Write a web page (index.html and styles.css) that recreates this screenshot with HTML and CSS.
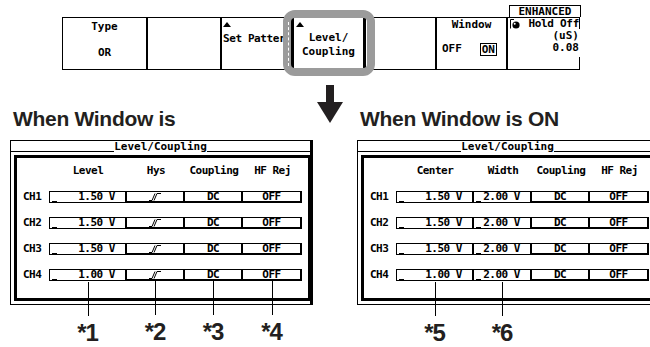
FILE: index.html
```html
<!DOCTYPE html>
<html>
<head>
    <meta charset="UTF-8">
    <title>Level/Coupling</title>
    <link rel="stylesheet" href="styles.css">
</head>
<body>
    <div class="softkeys">
        <div class="key key-type">
            <span>Type</span>
            <span>OR</span>
        </div>
        <div class="key key-blank1"></div>
        <div class="key key-pattern">
            <i class="tri"></i>
            <span class="cut">Set Pattern</span>
        </div>
        <div class="key key-level">
            <i class="tri"></i>
            <span class="lvl">Level/</span>
            <span>Coupling</span>
            <b class="ring"></b>
        </div>
        <div class="key key-blank2"></div>
        <div class="key key-window">
            <span>Window</span>
            <div class="toggle"><span>OFF</span><span class="on">ON</span></div>
        </div>
        <div class="key key-hold">
            <span class="tab">ENHANCED</span>
            <span class="hold-title"><svg width="10" height="10" viewBox="0 0 10 10"><path d="M0.5 9.5V0.5H4" stroke="#000" fill="none"/><circle cx="6" cy="6" r="3.6" fill="#000"/><circle cx="4.7" cy="4.7" r="1" fill="#fff"/></svg>Hold Off</span>
            <span>(uS)</span>
            <span>0.08</span>
        </div>
    </div>

    <div class="views">
        <section class="view view-left">
            <h2>When Window is</h2>
            <div class="screen">
                <div class="screen-title"><span>Level/Coupling</span></div>
                <div class="table">
                    <div class="grid">
                        <span></span><span class="head">Level</span><span class="head">Hys</span><span class="head">Coupling</span><span class="head">HF Rej</span>

                        <span class="ch">CH1</span>
                        <span class="cell num">1.50 V</span>
                        <span class="cell sel"><svg class="hys" width="12" height="9" viewBox="0 0 12 9"><path d="M0 8.5H3L6 1.5M5 8.5L8 1.5H12" stroke="#000" fill="none"/></svg></span>
                        <span class="cell sel">DC</span>
                        <span class="cell sel">OFF</span>

                        <span class="ch">CH2</span>
                        <span class="cell num">1.50 V</span>
                        <span class="cell sel"><svg class="hys" width="12" height="9" viewBox="0 0 12 9"><path d="M0 8.5H3L6 1.5M5 8.5L8 1.5H12" stroke="#000" fill="none"/></svg></span>
                        <span class="cell sel">DC</span>
                        <span class="cell sel">OFF</span>

                        <span class="ch">CH3</span>
                        <span class="cell num">1.50 V</span>
                        <span class="cell sel"><svg class="hys" width="12" height="9" viewBox="0 0 12 9"><path d="M0 8.5H3L6 1.5M5 8.5L8 1.5H12" stroke="#000" fill="none"/></svg></span>
                        <span class="cell sel">DC</span>
                        <span class="cell sel">OFF</span>

                        <span class="ch">CH4</span>
                        <span class="cell num pin">1.00 V<span class="tag">*1</span></span>
                        <span class="cell sel pin"><svg class="hys" width="12" height="9" viewBox="0 0 12 9"><path d="M0 8.5H3L6 1.5M5 8.5L8 1.5H12" stroke="#000" fill="none"/></svg><span class="tag">*2</span></span>
                        <span class="cell sel pin">DC<span class="tag">*3</span></span>
                        <span class="cell sel pin">OFF<span class="tag">*4</span></span>
                    </div>
                </div>
            </div>
        </section>

        <div class="arrow">
            <svg width="26" height="38" viewBox="0 0 26 38"><rect x="9" y="0" width="8" height="20" fill="#231f20"/><polygon points="0,17 26,17 13,38" fill="#231f20"/></svg>
        </div>

        <section class="view view-right">
            <h2>When Window is ON</h2>
            <div class="screen">
                <div class="screen-title"><span>Level/Coupling</span></div>
                <div class="table">
                    <div class="grid">
                        <span></span><span class="head">Center</span><span class="head">Width</span><span class="head">Coupling</span><span class="head">HF Rej</span>

                        <span class="ch">CH1</span>
                        <span class="cell num">1.50 V</span>
                        <span class="cell num">2.00 V</span>
                        <span class="cell sel">DC</span>
                        <span class="cell sel">OFF</span>

                        <span class="ch">CH2</span>
                        <span class="cell num">1.50 V</span>
                        <span class="cell num">2.00 V</span>
                        <span class="cell sel">DC</span>
                        <span class="cell sel">OFF</span>

                        <span class="ch">CH3</span>
                        <span class="cell num">1.50 V</span>
                        <span class="cell num">2.00 V</span>
                        <span class="cell sel">DC</span>
                        <span class="cell sel">OFF</span>

                        <span class="ch">CH4</span>
                        <span class="cell num pin">1.00 V<span class="tag">*5</span></span>
                        <span class="cell num pin">2.00 V<span class="tag">*6</span></span>
                        <span class="cell sel">DC</span>
                        <span class="cell sel">OFF</span>
                    </div>
                </div>
            </div>
        </section>
    </div>
</body>
</html>
```

FILE: styles.css
```css
body {
    margin: 0;
    width: 650px;
    height: 347px;
    overflow: hidden;
    background: #fff;
    color: #000;
    font-family: "DejaVu Sans Mono", "Liberation Mono", monospace;
    font-size: 11px;
    font-weight: bold;
}

/* soft key bar */
.softkeys {
    display: flex;
    box-sizing: border-box;
    width: 518px;
    height: 53px;
    margin: 17px 0 0 62px;
    border-top: 1px solid #000;
    border-bottom: 1px solid #000;
    border-left: 1px solid #000;
}
.key {
    position: relative;
    box-sizing: border-box;
    display: flex;
    flex-direction: column;
    height: 100%;
    border-right: 2px solid #000;
    line-height: 13px;
    white-space: nowrap;
}
.key-type { width: 85px; align-items: center; justify-content: space-between; padding: 2px 0 10px; }
.key-blank1 { width: 74px; }
.key-pattern { width: 70px; padding: 4px 0 0 1px; overflow: hidden; }
.key-level { width: 74px; align-items: center; padding-top: 4px; border-left: 2px solid #000; border-right-width: 3px; }
.key-blank2 { width: 71px; }
.key-window { width: 71px; align-items: center; }
.key-hold {
    width: 72px;
    align-items: flex-end;
    padding-right: 1px;
    line-height: 12px;
    border-right: none;
    background-image: linear-gradient(#000, #000), linear-gradient(#000, #000);
    background-size: 1px 11px, 1px 12px;
    background-position: right top, right bottom;
    background-repeat: no-repeat;
}

.tri {
    display: block;
    width: 0;
    height: 0;
    border-left: 4px solid transparent;
    border-right: 4px solid transparent;
    border-bottom: 5px solid #000;
}
.key-level .tri { align-self: flex-start; margin-left: 2px; }
.cut { margin-top: 5px; letter-spacing: -0.4px; }
.lvl { margin-top: 4px; line-height: 14px; }

.ring {
    position: absolute;
    left: -11px;
    right: -12px;
    top: -8px;
    bottom: -7px;
    border: 8px solid #9b9b9b;
    border-radius: 12px;
}
.ring::before {
    content: "";
    position: absolute;
    left: -3px;
    top: 4px;
    bottom: 2px;
    border-left: 1px dashed #fff;
}

.toggle {
    display: flex;
    justify-content: space-between;
    box-sizing: border-box;
    width: 100%;
    margin: auto 0 13px;
    padding: 0 9px 0 5px;
    line-height: 11px;
}
.on {
    border: 1px solid #000;
    padding: 0 1px;
}

.tab {
    position: absolute;
    left: 1px;
    right: -1px;
    top: -13px;
    box-sizing: border-box;
    height: 12px;
    border: 1px solid #000;
    border-bottom: none;
    text-align: center;
    line-height: 11px;
}
.hold-title {
    display: flex;
    align-self: stretch;
    align-items: center;
    justify-content: space-between;
    padding-left: 2px;
    letter-spacing: -0.3px;
}

/* lower part */
.views {
    display: flex;
    margin-top: 15px;
}
.view { flex: 0 0 303px; }
.view-left { margin-left: 10px; }
.view-right { margin-left: 14px; }
.arrow { flex: 0 0 26px; margin-left: 4px; }

h2 {
    margin: 22px 0 9px 3px;
    font: bold 21px/24px "Liberation Sans", Arial, sans-serif;
    letter-spacing: -0.3px;
    color: #231f20;
}

.screen {
    box-sizing: border-box;
    width: 303px;
    border: 1px solid #000;
    border-right-width: 3px;
}
.screen-title {
    display: flex;
    align-items: flex-end;
    height: 12px;
    line-height: 12px;
}
.screen-title::before,
.screen-title::after {
    content: "";
    flex: 1;
    margin-bottom: 1px;
    border-bottom: 1px solid #000;
}
.table {
    margin: 2px 0 3px 3px;
    padding: 6px 0 17px 6px;
    border: 3px solid #000;
    border-right-width: 2px;
}
.grid {
    display: grid;
    grid-template-columns: 26px 78px 58px 58px 59px;
    grid-template-rows: 13px repeat(4, 12px);
    row-gap: 14px;
    letter-spacing: -0.5px;
}
.head { text-align: center; line-height: 13px; }
.ch { line-height: 12px; }

.cell {
    position: relative;
    box-sizing: border-box;
    height: 12px;
    border-top: 1px solid #000;
    border-bottom: 1px solid #000;
    border-right: 2px solid #000;
    line-height: 10px;
}
.num {
    border-left: 1px solid #000;
    text-align: right;
    padding-right: 10px;
}
.num + .num { border-left: none; }
.num::before {
    content: "";
    position: absolute;
    left: 2px;
    bottom: 0;
    width: 5px;
    border-bottom: 1px solid #000;
}
.sel {
    border-bottom-width: 2px;
    text-align: center;
}
.hys { vertical-align: -1px; }

.pin::after {
    content: "";
    position: absolute;
    left: 50%;
    top: calc(100% + 2px);
    height: 34px;
    border-left: 1px solid #000;
}
.tag {
    position: absolute;
    left: 50%;
    top: calc(100% + 41px);
    transform: translateX(-50%);
    font: bold 24px/24px "Liberation Sans", Arial, sans-serif;
    letter-spacing: -1px;
    color: #231f20;
}
```
